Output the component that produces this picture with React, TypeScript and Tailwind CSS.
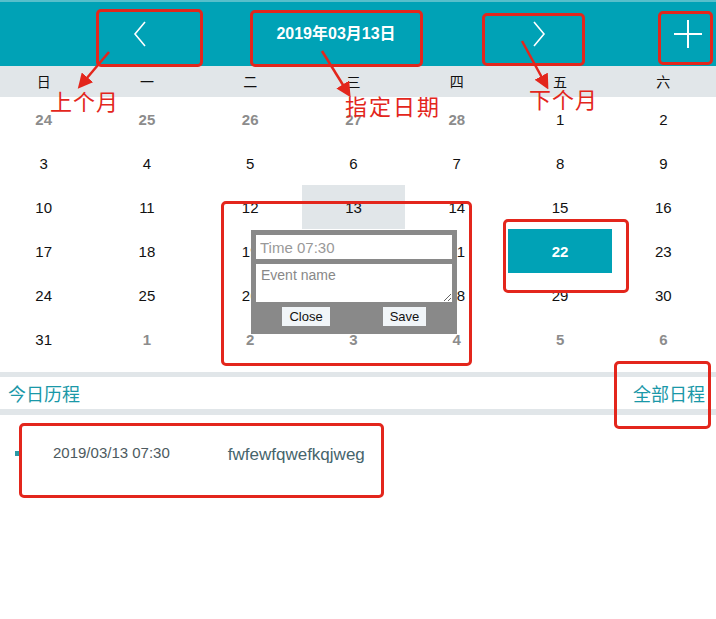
import React from "react";

const weeks = ["日", "一", "二", "三", "四", "五", "六"];

type Day = { n: number; other?: boolean };

const rows: Day[][] = [
  [{ n: 24, other: true }, { n: 25, other: true }, { n: 26, other: true }, { n: 27, other: true }, { n: 28, other: true }, { n: 1 }, { n: 2 }],
  [{ n: 3 }, { n: 4 }, { n: 5 }, { n: 6 }, { n: 7 }, { n: 8 }, { n: 9 }],
  [{ n: 10 }, { n: 11 }, { n: 12 }, { n: 13 }, { n: 14 }, { n: 15 }, { n: 16 }],
  [{ n: 17 }, { n: 18 }, { n: 19 }, { n: 20 }, { n: 21 }, { n: 22 }, { n: 23 }],
  [{ n: 24 }, { n: 25 }, { n: 26 }, { n: 27 }, { n: 28 }, { n: 29 }, { n: 30 }],
  [{ n: 31 }, { n: 1, other: true }, { n: 2, other: true }, { n: 3, other: true }, { n: 4, other: true }, { n: 5, other: true }, { n: 6, other: true }],
];

const font = { fontFamily: '"Liberation Sans", "Noto Sans CJK SC", sans-serif' };
const cjk = { fontFamily: '"Noto Sans CJK SC", sans-serif' };

export default function App() {
  return (
    <div className="relative w-[716px] h-[619px] bg-white overflow-hidden" style={font}>
      {/* Header */}
      <div className="h-[66px] bg-[#00a2b6] border-t-2 border-[#57bfcb] flex items-center text-white">
        <button className="ml-[120px] w-[40px] h-[40px] flex items-center justify-center">
          <svg width="14" height="26" viewBox="0 0 14 26">
            <polyline points="12,1 2,13 12,25" fill="none" stroke="white" strokeWidth="1.6" />
          </svg>
        </button>
        <div className="ml-[76px] w-[200px] text-center text-[16px] font-bold">2019年03月13日</div>
        <button className="ml-[83px] w-[40px] h-[40px] flex items-center justify-center">
          <svg width="14" height="26" viewBox="0 0 14 26">
            <polyline points="2,1 12,13 2,25" fill="none" stroke="white" strokeWidth="1.6" />
          </svg>
        </button>
        <button className="ml-[109px] w-[40px] h-[40px] flex items-center justify-center">
          <svg width="30" height="30" viewBox="0 0 30 30">
            <line x1="15" y1="1" x2="15" y2="29" stroke="white" strokeWidth="2" />
            <line x1="1" y1="15" x2="29" y2="15" stroke="white" strokeWidth="2" />
          </svg>
        </button>
      </div>

      {/* Week names */}
      <div className="h-[31px] bg-[#e1e6e9]">
        <div className="w-[723px] ml-[-8px] h-full grid grid-cols-7 items-center pt-[2px] text-[14px] text-[#111]">
          {weeks.map((w) => (
            <div key={w} className="text-center">{w}</div>
          ))}
        </div>
      </div>

      {/* Dates */}
      <div className="relative">
        {rows.map((r, i) => (
          <div key={i} className="w-[723px] ml-[-8px] grid grid-cols-7 h-[44px]">
            {r.map((d, j) => {
              const sel = i === 2 && j === 3;
              const hl = i === 3 && j === 5;
              return (
                <div
                  key={j}
                  className={
                    "flex items-center justify-center pt-[2px] text-[15px] " +
                    (hl
                      ? "bg-[#00a2b6] text-white font-bold"
                      : sel
                      ? "bg-[#e1e6e9] text-[#111]"
                      : d.other
                      ? "text-[#8c8c8c] font-bold"
                      : "text-[#111]")
                  }
                >
                  {d.n}
                </div>
              );
            })}
          </div>
        ))}

        {/* Event popup */}
        <div className="absolute left-[251px] top-[133px] w-[206px] h-[104px] bg-[#898989] p-[5px] flex flex-col gap-[5px]">
          <input
            placeholder="Time 07:30"
            className="h-[24px] bg-white px-[4px] text-[15px] text-[#333] placeholder:text-[#999] outline-none"
            style={font}
          />
          <textarea
            placeholder="Event name"
            className="h-[38px] bg-white px-[5px] py-[1px] text-[14px] placeholder:text-[#888] outline-none"
            style={font}
          />
          <div className="flex">
            <button className="ml-[26px] w-[48px] h-[19px] bg-[#f1f5f8] text-[13px] text-[#111] leading-none">Close</button>
            <button className="ml-[53px] w-[43px] h-[19px] bg-[#f1f5f8] text-[13px] text-[#111] leading-none">Save</button>
          </div>
        </div>
      </div>

      {/* Today schedule */}
      <div className="mt-[11px] h-[5px] bg-[#e1e6e9]" />
      <div className="h-[32px] flex items-center justify-between pl-[8px] pr-[11px] text-[18px] text-[#1a98a8]" style={cjk}>
        <span>今日历程</span>
        <span>全部日程</span>
      </div>
      <div className="h-[6px] bg-[#e1e6e9]" />

      <div className="flex items-center pt-[24px] pl-[15px]">
        <div className="w-[4px] h-[5px] bg-[#2a9aa6]" />
        <span className="ml-[34px] text-[15px] text-[#4d5a60]">2019/03/13 07:30</span>
        <span className="ml-[58px] mt-[3px] text-[17px] text-[#46656c]">fwfewfqwefkqjweg</span>
      </div>

      {/* Annotations */}
      <div className="absolute left-[96px] top-[9px] w-[107px] h-[58px] border-[3px] border-[#e3261c] rounded-[5px]" />
      <div className="absolute left-[250px] top-[10px] w-[173px] h-[57px] border-[3px] border-[#e3261c] rounded-[5px]" />
      <div className="absolute left-[482px] top-[13px] w-[103px] h-[53px] border-[3px] border-[#e3261c] rounded-[5px]" />
      <div className="absolute left-[658px] top-[11px] w-[55px] h-[54px] border-[3px] border-[#e3261c] rounded-[5px]" />
      <div className="absolute left-[221px] top-[201px] w-[251px] h-[165px] border-[3px] border-[#e3261c] rounded-[5px]" />
      <div className="absolute left-[503px] top-[219px] w-[126px] h-[74px] border-[3px] border-[#e3261c] rounded-[5px]" />
      <div className="absolute left-[614px] top-[361px] w-[97px] h-[68px] border-[3px] border-[#e3261c] rounded-[5px]" />
      <div className="absolute left-[19px] top-[423px] w-[365px] h-[75px] border-[3px] border-[#e3261c] rounded-[5px]" />

      <svg className="absolute left-0 top-0" width="716" height="140" viewBox="0 0 716 140">
        <defs>
          <marker id="ah" markerWidth="6" markerHeight="6" refX="4" refY="3" orient="auto">
            <path d="M0,0 L6,3 L0,6 Z" fill="#e3261c" />
          </marker>
        </defs>
        <line x1="109" y1="52" x2="81" y2="85" stroke="#e3261c" strokeWidth="2.5" markerEnd="url(#ah)" />
        <line x1="322" y1="51" x2="348" y2="93" stroke="#e3261c" strokeWidth="2.5" markerEnd="url(#ah)" />
        <line x1="522" y1="41" x2="546" y2="85" stroke="#e3261c" strokeWidth="2.5" markerEnd="url(#ah)" />
      </svg>

      <div className="absolute left-[50px] top-[89px] text-[22px] leading-none text-[#e3261c] tracking-[1px]" style={cjk}>上个月</div>
      <div className="absolute left-[345px] top-[94px] text-[22px] leading-none text-[#e3261c] tracking-[2px]" style={cjk}>指定日期</div>
      <div className="absolute left-[529px] top-[87px] text-[22px] leading-none text-[#e3261c] tracking-[1px]" style={cjk}>下个月</div>
    </div>
  );
}
